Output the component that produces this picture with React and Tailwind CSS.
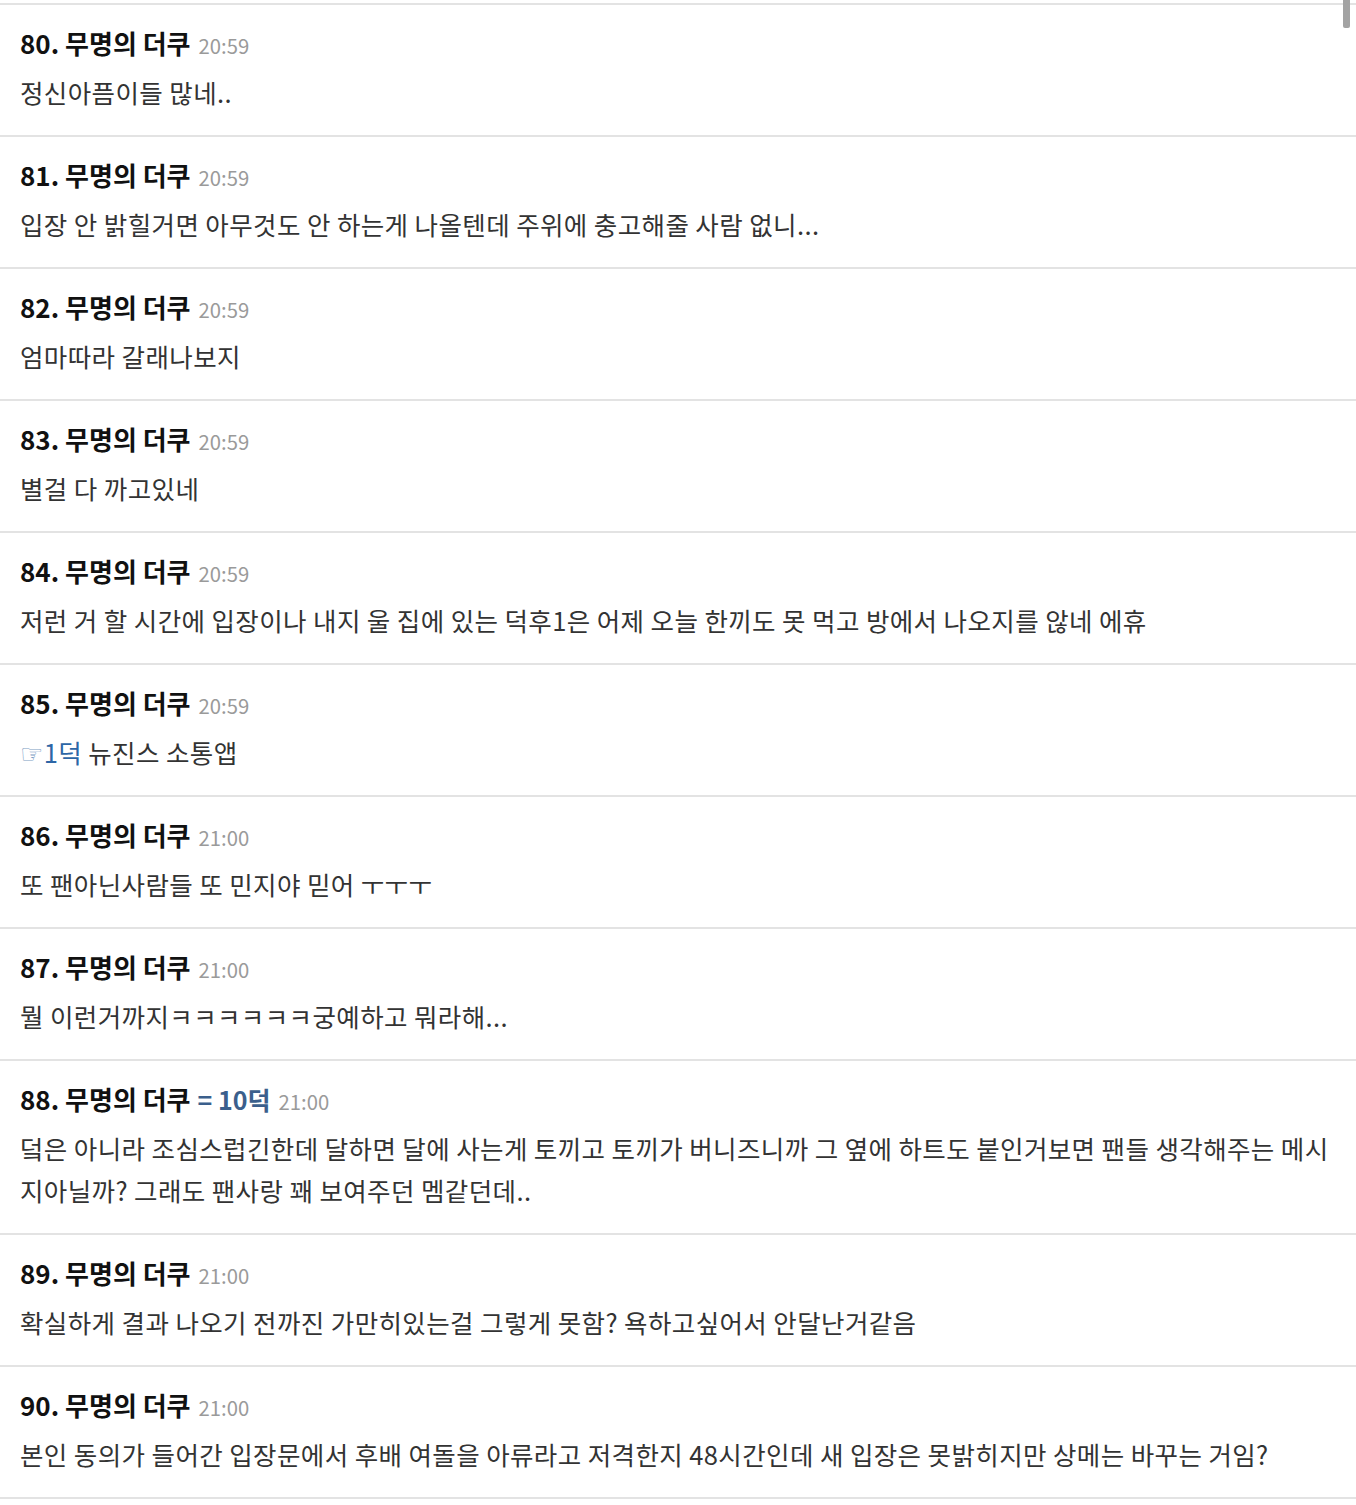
import React from "react";

const items = [
  { n: 80, t: "20:59", body: "정신아픔이들 많네.." },
  { n: 81, t: "20:59", body: "입장 안 밝힐거면 아무것도 안 하는게 나올텐데 주위에 충고해줄 사람 없니..." },
  { n: 82, t: "20:59", body: "엄마따라 갈래나보지" },
  { n: 83, t: "20:59", body: "별걸 다 까고있네" },
  { n: 84, t: "20:59", body: "저런 거 할 시간에 입장이나 내지 울 집에 있는 덕후1은 어제 오늘 한끼도 못 먹고 방에서 나오지를 않네 에휴" },
  { n: 85, t: "20:59", link: true, body: " 뉴진스 소통앱" },
  { n: 86, t: "21:00", body: "또 팬아닌사람들 또 민지야 믿어 ㅜㅜㅜ" },
  { n: 87, t: "21:00", body: "뭘 이런거까지ㅋㅋㅋㅋㅋㅋ궁예하고 뭐라해..." },
  { n: 88, t: "21:00", ref: "= 10덕", body: "덬은 아니라 조심스럽긴한데 달하면 달에 사는게 토끼고 토끼가 버니즈니까 그 옆에 하트도 붙인거보면 팬들 생각해주는 메시지아닐까? 그래도 팬사랑 꽤 보여주던 멤같던데.." },
  { n: 89, t: "21:00", body: "확실하게 결과 나오기 전까진 가만히있는걸 그렇게 못함? 욕하고싶어서 안달난거같음" },
  { n: 90, t: "21:00", body: "본인 동의가 들어간 입장문에서 후배 여돌을 아류라고 저격한지 48시간인데 새 입장은 못밝히지만 상메는 바꾸는 거임?" },
];

export default function App() {
  return (
    <div
      className="relative w-[1356px] min-h-[1505px] bg-white pt-[3px]"
      style={{ fontFamily: '"Noto Sans CJK KR", "Noto Sans", sans-serif' }}
    >
      <div className="absolute right-[6px] top-0 h-[28px] w-[7px] rounded-b-[2px] bg-[#a3a3a3]" />
      <ul className="border-t-2 border-[#e3e3e3]">
        {items.map((it) => (
          <li key={it.n} className="border-b-2 border-[#e3e3e3] pl-[20px] pr-[20px] pt-[20px] pb-[22px]">
            <div className="flex items-baseline h-[36px] leading-[36px]">
              <span className="text-[26px] font-bold text-[#111]">{it.n}. 무명의 더쿠</span>
              {it.ref && (
                <span className="ml-[7px] text-[25px] font-bold text-[#3b5f8c]">{it.ref}</span>
              )}
              <span className="ml-[8px] text-[20.3px] text-[#9a9a9a]">{it.t}</span>
            </div>
            <p className="mt-[10px] text-[25.5px] leading-[42px] tracking-[0.4px] text-[#333]">
              {it.link && (
                <span className="text-[#2d66a6]">
                  <span
                    className="text-[26px] leading-none text-[#7c9cc4]"
                    style={{ fontFamily: '"DejaVu Sans", sans-serif' }}
                  >
                    ☞
                  </span>
                  1덕
                </span>
              )}
              {it.body}
            </p>
          </li>
        ))}
      </ul>
    </div>
  );
}
